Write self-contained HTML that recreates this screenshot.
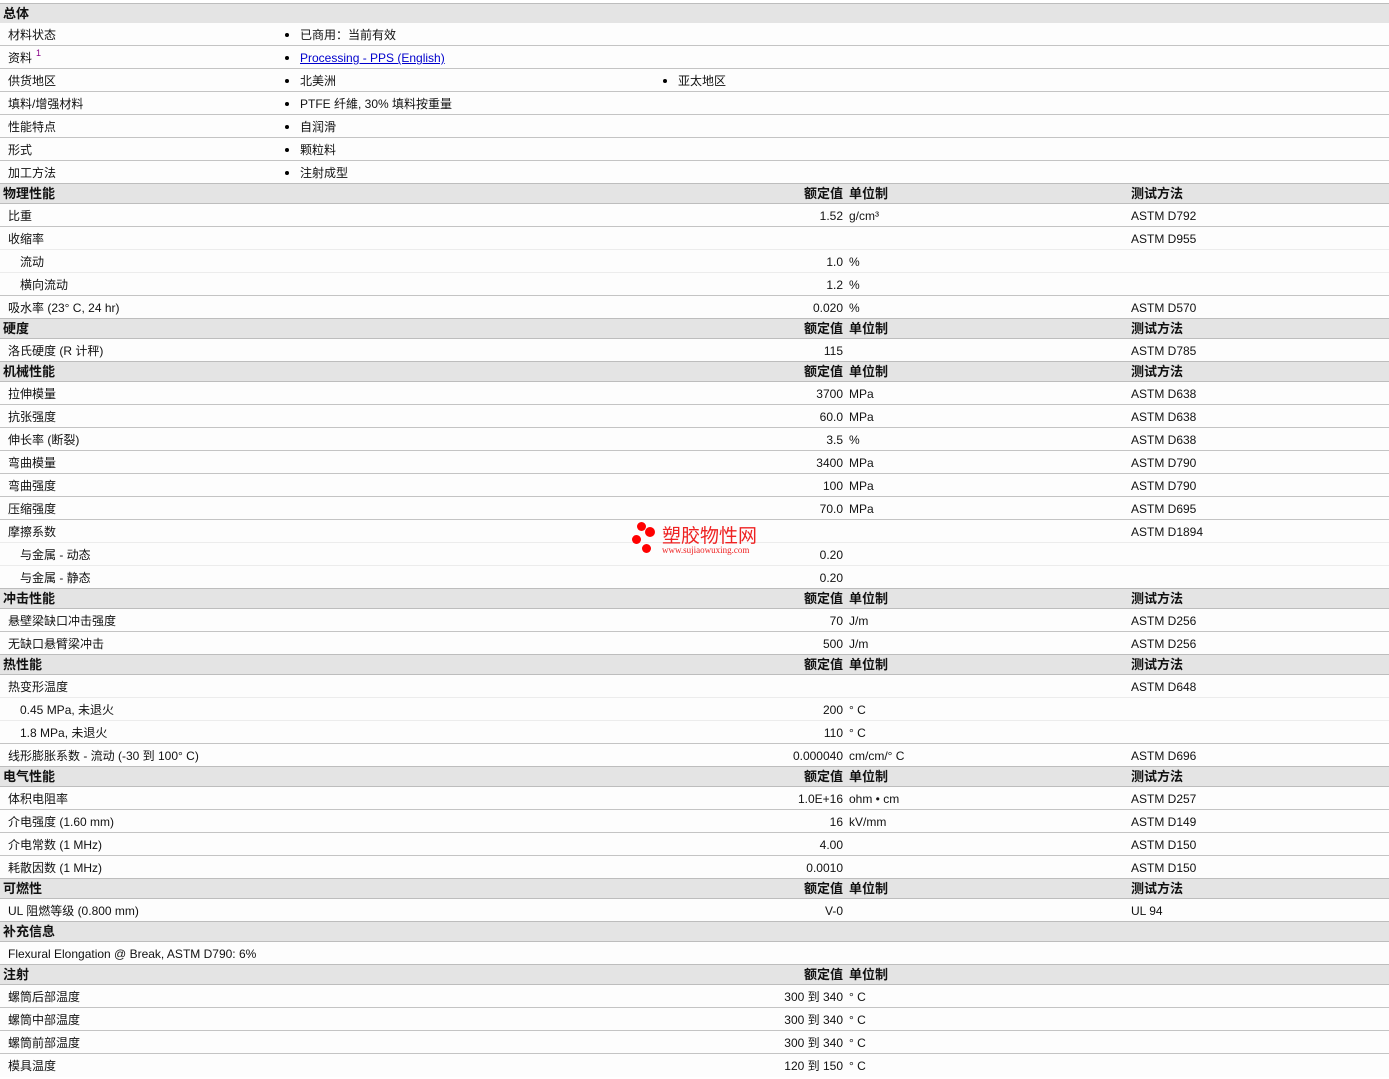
<!DOCTYPE html>
<html><head><meta charset="utf-8">
<style>
html,body{margin:0;padding:0;background:#fff;}
body{width:1389px;height:1077px;position:relative;overflow:hidden;font-family:"Liberation Sans","Noto Sans CJK SC","WenQuanYi Zen Hei",sans-serif;font-size:12px;color:#111;}
.r{position:absolute;left:0;width:1389px;height:23px;line-height:25px;background:#fdfdfd;border-bottom:1px solid #c4c4c4;box-sizing:border-box;}
.r.f{border-bottom-color:#ececec;}
.h{position:absolute;left:0;width:1389px;height:21px;line-height:20px;background:#e4e4e4;border-top:1px solid #bdbdbd;border-bottom:1px solid #bdbdbd;box-sizing:border-box;font-weight:bold;font-size:13px;}
.l{position:absolute;left:8px;}
.s{left:20px;}
.h .l{left:3px;}
.v{position:absolute;right:546px;text-align:right;}
.u{position:absolute;left:849px;}
.t{position:absolute;left:1131px;}
.b{position:absolute;left:285px;}
.b2{position:absolute;left:663px;}
.b::before,.b2::before{content:"";display:inline-block;width:4px;height:4px;border-radius:50%;background:#000;margin-right:11px;vertical-align:2px;}
a{color:#00c;text-decoration:underline;}
.sup{position:absolute;left:36px;top:-5px;color:#808;font-size:9px;}
.wm{position:absolute;left:632px;top:520px;width:130px;height:38px;}
.d{position:absolute;background:#f00;border-radius:50%;}
</style></head><body>
<div class="h" style="top:3px"><span class="l">总体</span></div>
<div class="r" style="top:23px"><span class="l">材料状态</span><span class="b">已商用：当前有效</span></div>
<div class="r" style="top:46px"><span class="l">资料</span><span class="sup">1</span><span class="b"><a>Processing - PPS (English)</a></span></div>
<div class="r" style="top:69px"><span class="l">供货地区</span><span class="b">北美洲</span><span class="b2">亚太地区</span></div>
<div class="r" style="top:92px"><span class="l">填料/增强材料</span><span class="b">PTFE 纤維, 30% 填料按重量</span></div>
<div class="r" style="top:115px"><span class="l">性能特点</span><span class="b">自润滑</span></div>
<div class="r" style="top:138px"><span class="l">形式</span><span class="b">颗粒料</span></div>
<div class="r" style="top:161px;border:0"><span class="l">加工方法</span><span class="b">注射成型</span></div>

<div class="h" style="top:183px"><span class="l">物理性能</span><span class="v">额定值</span><span class="u">单位制</span><span class="t">测试方法</span></div>
<div class="r" style="top:204px"><span class="l">比重</span><span class="v">1.52</span><span class="u">g/cm³</span><span class="t">ASTM D792</span></div>
<div class="r f" style="top:227px"><span class="l">收缩率</span><span class="t">ASTM D955</span></div>
<div class="r f" style="top:250px"><span class="l s">流动</span><span class="v">1.0</span><span class="u">%</span></div>
<div class="r" style="top:273px"><span class="l s">横向流动</span><span class="v">1.2</span><span class="u">%</span></div>
<div class="r" style="top:296px;border:0"><span class="l">吸水率 (23° C, 24 hr)</span><span class="v">0.020</span><span class="u">%</span><span class="t">ASTM D570</span></div>

<div class="h" style="top:318px"><span class="l">硬度</span><span class="v">额定值</span><span class="u">单位制</span><span class="t">测试方法</span></div>
<div class="r" style="top:339px;border:0"><span class="l">洛氏硬度 (R 计秤)</span><span class="v">115</span><span class="t">ASTM D785</span></div>

<div class="h" style="top:361px"><span class="l">机械性能</span><span class="v">额定值</span><span class="u">单位制</span><span class="t">测试方法</span></div>
<div class="r" style="top:382px"><span class="l">拉伸模量</span><span class="v">3700</span><span class="u">MPa</span><span class="t">ASTM D638</span></div>
<div class="r" style="top:405px"><span class="l">抗张强度</span><span class="v">60.0</span><span class="u">MPa</span><span class="t">ASTM D638</span></div>
<div class="r" style="top:428px"><span class="l">伸长率 (断裂)</span><span class="v">3.5</span><span class="u">%</span><span class="t">ASTM D638</span></div>
<div class="r" style="top:451px"><span class="l">弯曲模量</span><span class="v">3400</span><span class="u">MPa</span><span class="t">ASTM D790</span></div>
<div class="r" style="top:474px"><span class="l">弯曲强度</span><span class="v">100</span><span class="u">MPa</span><span class="t">ASTM D790</span></div>
<div class="r" style="top:497px"><span class="l">压缩强度</span><span class="v">70.0</span><span class="u">MPa</span><span class="t">ASTM D695</span></div>
<div class="r f" style="top:520px"><span class="l">摩擦系数</span><span class="t">ASTM D1894</span></div>
<div class="r f" style="top:543px"><span class="l s">与金属 - 动态</span><span class="v">0.20</span></div>
<div class="r" style="top:566px;border:0"><span class="l s">与金属 - 静态</span><span class="v">0.20</span></div>

<div class="h" style="top:588px"><span class="l">冲击性能</span><span class="v">额定值</span><span class="u">单位制</span><span class="t">测试方法</span></div>
<div class="r" style="top:609px"><span class="l">悬壁梁缺口冲击强度</span><span class="v">70</span><span class="u">J/m</span><span class="t">ASTM D256</span></div>
<div class="r" style="top:632px;border:0"><span class="l">无缺口悬臂梁冲击</span><span class="v">500</span><span class="u">J/m</span><span class="t">ASTM D256</span></div>

<div class="h" style="top:654px"><span class="l">热性能</span><span class="v">额定值</span><span class="u">单位制</span><span class="t">测试方法</span></div>
<div class="r f" style="top:675px"><span class="l">热变形温度</span><span class="t">ASTM D648</span></div>
<div class="r f" style="top:698px"><span class="l s">0.45 MPa, 未退火</span><span class="v">200</span><span class="u">° C</span></div>
<div class="r" style="top:721px"><span class="l s">1.8 MPa, 未退火</span><span class="v">110</span><span class="u">° C</span></div>
<div class="r" style="top:744px;border:0"><span class="l">线形膨胀系数 - 流动 (-30 到 100° C)</span><span class="v">0.000040</span><span class="u">cm/cm/° C</span><span class="t">ASTM D696</span></div>

<div class="h" style="top:766px"><span class="l">电气性能</span><span class="v">额定值</span><span class="u">单位制</span><span class="t">测试方法</span></div>
<div class="r" style="top:787px"><span class="l">体积电阻率</span><span class="v">1.0E+16</span><span class="u">ohm • cm</span><span class="t">ASTM D257</span></div>
<div class="r" style="top:810px"><span class="l">介电强度 (1.60 mm)</span><span class="v">16</span><span class="u">kV/mm</span><span class="t">ASTM D149</span></div>
<div class="r" style="top:833px"><span class="l">介电常数 (1 MHz)</span><span class="v">4.00</span><span class="t">ASTM D150</span></div>
<div class="r" style="top:856px;border:0"><span class="l">耗散因数 (1 MHz)</span><span class="v">0.0010</span><span class="t">ASTM D150</span></div>

<div class="h" style="top:878px"><span class="l">可燃性</span><span class="v">额定值</span><span class="u">单位制</span><span class="t">测试方法</span></div>
<div class="r" style="top:899px;border:0"><span class="l">UL 阻燃等级 (0.800 mm)</span><span class="v">V-0</span><span class="t">UL 94</span></div>

<div class="h" style="top:921px"><span class="l">补充信息</span></div>
<div class="r" style="top:942px;border:0"><span class="l">Flexural Elongation @ Break, ASTM D790: 6%</span></div>

<div class="h" style="top:964px"><span class="l">注射</span><span class="v">额定值</span><span class="u">单位制</span></div>
<div class="r" style="top:985px"><span class="l">螺筒后部温度</span><span class="v">300 到 340</span><span class="u">° C</span></div>
<div class="r" style="top:1008px"><span class="l">螺筒中部温度</span><span class="v">300 到 340</span><span class="u">° C</span></div>
<div class="r" style="top:1031px"><span class="l">螺筒前部温度</span><span class="v">300 到 340</span><span class="u">° C</span></div>
<div class="r" style="top:1054px;border:0"><span class="l">模具温度</span><span class="v">120 到 150</span><span class="u">° C</span></div>

<div class="wm">
<div class="d" style="left:5px;top:2px;width:9px;height:9px"></div>
<div class="d" style="left:13px;top:7px;width:10px;height:10px"></div>
<div class="d" style="left:0px;top:15px;width:9px;height:9px"></div>
<div class="d" style="left:10px;top:24px;width:9px;height:9px"></div>
<div style="position:absolute;left:30px;top:5px;color:#e22;font-size:19px;line-height:20px;font-family:'Noto Sans CJK SC',sans-serif;">塑胶物性网</div>
<div style="position:absolute;left:30px;top:25px;color:#e22;font-size:9px;line-height:10px;font-family:'Liberation Serif',serif;">www.sujiaowuxing.com</div>
</div>
</body></html>
